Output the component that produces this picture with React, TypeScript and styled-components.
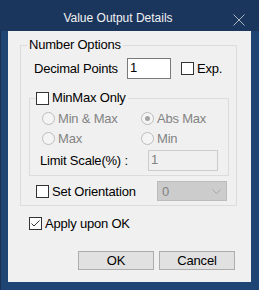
import React from "react";
import styled, { createGlobalStyle } from "styled-components";

const GlobalStyle = createGlobalStyle`
  html, body {
    margin: 0;
    padding: 0;
    background: #f0f0f0;
  }
  body {
    font-family: "Liberation Sans", Arial, sans-serif;
    font-size: 13px;
    color: #000;
  }
`;

const Window = styled.div`
  width: 259px;
  height: 290px;
  display: flex;
  flex-direction: column;
  background: #1f4574;
`;

const TitleBar = styled.div`
  height: 31px;
  box-sizing: border-box;
  display: flex;
  align-items: center;
  padding: 4px 9px 0 8px;
  background: #1b365d;
  color: #f2f2f2;
  font-size: 12px;
`;

const TitleText = styled.div`
  flex: 1;
  text-align: center;
`;

const CloseButton = styled.div`
  width: 22px;
  height: 14px;
  margin-top: 4px;
  display: flex;
  align-items: center;
  justify-content: center;
`;

const Frame = styled.div`
  flex: 1;
  display: flex;
  border-left: 1px solid #1a3152;
  padding: 0 8px 8px 7px;
`;

const Client = styled.div`
  flex: 1;
  display: flex;
  flex-direction: column;
  background: #f0f0f0;
  padding-left: 12px;
  letter-spacing: -0.2px;
`;

const Group = styled.fieldset<{ $mt: number; $mr: number; $ml?: number; $pb: number }>`
  margin: ${p => p.$mt}px ${p => p.$mr}px 0 ${p => p.$ml ?? 0}px;
  padding: 0 0 ${p => p.$pb}px 0;
  border: 1px solid #dcdcdc;
  min-width: 0;
`;

const Legend = styled.legend<{ $pl?: number }>`
  margin-left: 6px;
  padding: 0 2px 0 ${p => p.$pl ?? 0}px;
  height: 14px;
  line-height: 14px;
  display: flex;
  align-items: center;
  gap: 3px;
`;

const Row = styled.div<{ $mt: number; $pl: number; $h: number }>`
  display: flex;
  align-items: center;
  margin-top: ${p => p.$mt}px;
  padding-left: ${p => p.$pl}px;
  height: ${p => p.$h}px;
`;

const FieldLabel = styled.span<{ $w: number }>`
  width: ${p => p.$w}px;
  white-space: nowrap;
`;

const TextBox = styled.div<{ $w: number; $disabled?: boolean }>`
  width: ${p => p.$w}px;
  height: 21px;
  box-sizing: border-box;
  border: 1px solid ${p => (p.$disabled ? "#cccccc" : "#7a7a7a")};
  background: ${p => (p.$disabled ? "#f0f0f0" : "#ffffff")};
  color: ${p => (p.$disabled ? "#838383" : "#000")};
  padding: 1px 0 0 2px;
  line-height: 15px;
`;

const CheckItem = styled.label<{ $w?: number; $ml?: number; $disabled?: boolean }>`
  display: flex;
  align-items: center;
  gap: 3px;
  white-space: nowrap;
  ${p => (p.$w ? `width: ${p.$w}px;` : "")}
  margin-left: ${p => p.$ml ?? 0}px;
  color: ${p => (p.$disabled ? "#838383" : "#000")};
`;

const Box = styled.span`
  width: 13px;
  height: 13px;
  box-sizing: border-box;
  border: 1px solid #333333;
  background: #ffffff;
  display: flex;
  align-items: center;
  justify-content: center;
  flex-shrink: 0;
`;

const RadioCircle = styled.span`
  width: 13px;
  height: 13px;
  box-sizing: border-box;
  border: 1px solid #bcbcbc;
  border-radius: 50%;
  background: #f4f4f4;
  display: flex;
  align-items: center;
  justify-content: center;
  flex-shrink: 0;
`;

const RadioDot = styled.span`
  width: 5px;
  height: 5px;
  border-radius: 50%;
  background: #a3a3a3;
`;

const RadioGrid = styled.div`
  display: grid;
  grid-template-columns: 99px 1fr;
  row-gap: 7px;
  margin-top: 7px;
  padding-left: 12px;
  grid-auto-rows: 13px;
`;

const Dropdown = styled.div`
  width: 70px;
  height: 20px;
  box-sizing: border-box;
  border: 1px solid #bcbcbc;
  background: #cccccc;
  color: #838383;
  display: flex;
  align-items: center;
  justify-content: space-between;
  padding: 0 5px 0 4px;
`;

const ButtonBar = styled.div`
  margin-top: auto;
  margin-bottom: 12px;
  margin-right: 16px;
  display: flex;
  justify-content: flex-end;
  gap: 5px;
`;

const Button = styled.button`
  width: 76px;
  height: 19px;
  box-sizing: border-box;
  border: 1px solid #adadad;
  background: #e1e1e1;
  font-family: inherit;
  font-size: 13px;
  letter-spacing: -0.2px;
  color: #000;
  padding: 0;
  line-height: 16px;
`;

const CheckBox: React.FC<{ checked?: boolean }> = ({ checked }) => (
  <Box>
    {checked && (
      <svg width="11" height="11" viewBox="0 0 11 11">
        <polyline points="1.5,5.5 4,8 9.5,2.5" fill="none" stroke="#333" strokeWidth="1" />
      </svg>
    )}
  </Box>
);

const Radio: React.FC<{ label: string; selected?: boolean }> = ({ label, selected }) => (
  <CheckItem $disabled>
    <RadioCircle>{selected && <RadioDot />}</RadioCircle>
    {label}
  </CheckItem>
);

export default function App() {
  return (
    <>
      <GlobalStyle />
      <Window>
        <TitleBar>
          <TitleText>Value Output Details</TitleText>
          <CloseButton>
            <svg width="12" height="12" viewBox="0 0 12 12">
              <path d="M0.5 0.5 L11.5 11.5 M11.5 0.5 L0.5 11.5" stroke="#a9b3c1" strokeWidth="1" />
            </svg>
          </CloseButton>
        </TitleBar>
        <Frame>
          <Client>
            <Group $mt={7} $mr={14} $pb={4}>
              <Legend $pl={2}>Number Options</Legend>
              <Row $mt={6} $pl={13} $h={21}>
                <FieldLabel $w={93}>Decimal Points</FieldLabel>
                <TextBox $w={44}>1</TextBox>
                <CheckItem $ml={10}>
                  <CheckBox />
                  Exp.
                </CheckItem>
              </Row>
              <Group $mt={12} $mr={7} $ml={8} $pb={4}>
                <Legend>
                  <CheckBox />
                  MinMax Only
                </Legend>
                <RadioGrid>
                  <Radio label="Min & Max" />
                  <Radio label="Abs Max" selected />
                  <Radio label="Max" />
                  <Radio label="Min" />
                </RadioGrid>
                <Row $mt={5} $pl={10} $h={21}>
                  <FieldLabel $w={108}>Limit Scale(%) :</FieldLabel>
                  <TextBox $w={70} $disabled>1</TextBox>
                </Row>
              </Group>
              <Row $mt={5} $pl={15} $h={20}>
                <CheckItem $w={121}>
                  <CheckBox />
                  Set Orientation
                </CheckItem>
                <Dropdown>
                  <span>0</span>
                  <svg width="9" height="5" viewBox="0 0 9 5">
                    <polyline points="0.5,0.5 4.5,4.5 8.5,0.5" fill="none" stroke="#a8a8a8" strokeWidth="1" />
                  </svg>
                </Dropdown>
              </Row>
            </Group>
            <Row $mt={11} $pl={9} $h={13}>
              <CheckItem>
                <CheckBox checked />
                Apply upon OK
              </CheckItem>
            </Row>
            <ButtonBar>
              <Button>OK</Button>
              <Button>Cancel</Button>
            </ButtonBar>
          </Client>
        </Frame>
      </Window>
    </>
  );
}
